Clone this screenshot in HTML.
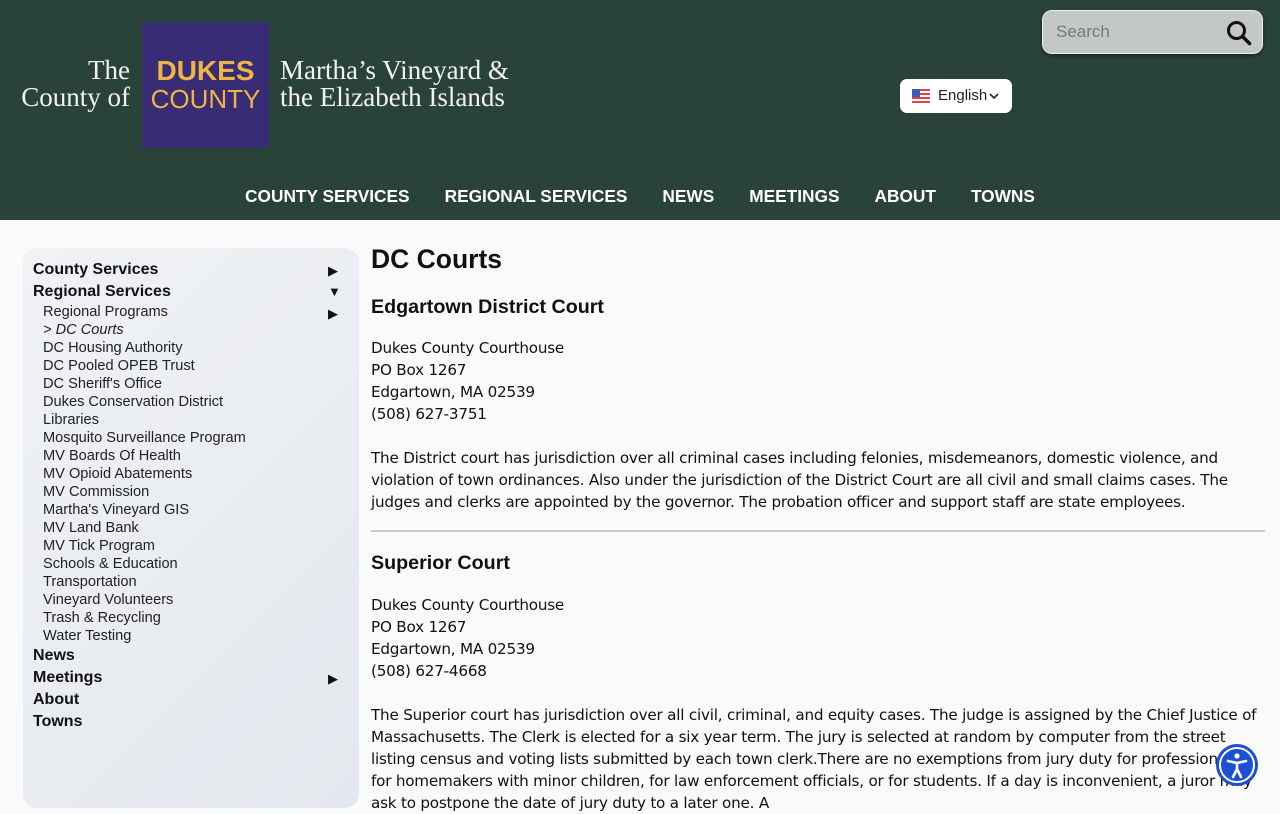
<!DOCTYPE html>
<html><head><meta charset="utf-8"><style>
*{box-sizing:border-box;margin:0;padding:0}
body{width:1280px;height:800px;overflow:hidden;background:#fafafa;font-family:"Liberation Sans",sans-serif;position:relative}
.hdr{position:absolute;left:0;top:0;width:1280px;height:220px;background:#2a4339}
.serif{font-family:"Liberation Serif",serif;color:#f2f2ee;font-size:27px;line-height:27px;position:absolute}
.logo{position:absolute;left:142px;top:22px;width:127px;height:126px;background:#392c76;color:#f0b445;text-align:center}
.search{position:absolute;left:1042px;top:10px;width:221px;height:44px;background:#c4c8c4;border:1px solid #eee;border-radius:10px;box-shadow:0 2px 4px rgba(0,0,0,.4)}
.lang{position:absolute;left:900px;top:79px;width:112px;height:34px;background:#fff;border-radius:7px;font-size:15px;color:#222}
.nav{position:absolute;top:186px;left:0;width:1280px;text-align:center;font-weight:bold;color:#fff;font-size:17.3px}
.nav span{margin:0 17.5px}
.side{position:absolute;left:23px;top:248px;width:336px;height:560px;background:linear-gradient(135deg,#f0f2f5,#e3e8ee);border-radius:14px}
.side div{position:absolute;left:10px;font-size:16px;font-weight:bold;color:#111}
.side .s{left:20px;font-size:14.6px;font-weight:normal;color:#222}
.arr{position:absolute;left:305px;font-size:13px;color:#111}
.main{position:absolute;left:371px;top:0;width:900px;color:#111}
.main p{font-family:"DejaVu Sans",sans-serif;font-size:15.2px;line-height:22px;position:absolute;left:0;width:890px;letter-spacing:-0.22px}
</style></head><body>
<div class="hdr">
<div class="serif" style="right:1150px;top:57px;text-align:right">The<br>County of</div>
<div class="logo"><div style="font-weight:bold;font-size:28px;margin-top:35px;line-height:28px">DUKES</div><div style="font-size:26px;line-height:28px">COUNTY</div></div>
<div class="serif" style="left:280px;top:57px">Martha’s Vineyard &amp;<br>the Elizabeth Islands</div>
<div class="search"><span style="position:absolute;left:13px;top:11px;font-size:17px;color:#777">Search</span>
<svg style="position:absolute;left:182px;top:8px" width="28" height="28" viewBox="0 0 28 28"><circle cx="11.5" cy="11.5" r="8" fill="none" stroke="#111" stroke-width="3"/><line x1="17.5" y1="17.5" x2="24.5" y2="24.5" stroke="#111" stroke-width="3.5" stroke-linecap="round"/></svg></div>
<div class="lang"><svg style="position:absolute;left:12px;top:10px" width="18" height="14"><rect width="18" height="14" fill="#d44"/><rect y="2" width="18" height="2" fill="#fff"/><rect y="6" width="18" height="2" fill="#fff"/><rect y="10" width="18" height="2" fill="#fff"/><rect width="8" height="8" fill="#3b5bb5"/></svg><span style="position:absolute;left:38px;top:8px">English</span><svg style="position:absolute;left:89px;top:14px" width="10" height="7"><path d="M1 1l4 4 4-4" stroke="#222" stroke-width="1.6" fill="none"/></svg></div>
<div class="nav"><span>COUNTY SERVICES</span><span>REGIONAL SERVICES</span><span>NEWS</span><span>MEETINGS</span><span>ABOUT</span><span>TOWNS</span></div>
</div>
<div class="side">
<div style="top:13px">County Services</div><span class="arr" style="top:15px">▶</span>
<div style="top:35px">Regional Services</div><span class="arr" style="top:36px">▼</span>
<div class="s" style="top:56px">Regional Programs</div><span class="arr" style="top:58px">▶</span>
<div class="s" style="top:74px;font-style:italic">&gt; DC Courts</div>
<div class="s" style="top:92px">DC Housing Authority</div>
<div class="s" style="top:110px">DC Pooled OPEB Trust</div>
<div class="s" style="top:128px">DC Sheriff's Office</div>
<div class="s" style="top:146px">Dukes Conservation District</div>
<div class="s" style="top:164px">Libraries</div>
<div class="s" style="top:182px">Mosquito Surveillance Program</div>
<div class="s" style="top:200px">MV Boards Of Health</div>
<div class="s" style="top:218px">MV Opioid Abatements</div>
<div class="s" style="top:236px">MV Commission</div>
<div class="s" style="top:254px">Martha's Vineyard GIS</div>
<div class="s" style="top:272px">MV Land Bank</div>
<div class="s" style="top:290px">MV Tick Program</div>
<div class="s" style="top:308px">Schools &amp; Education</div>
<div class="s" style="top:326px">Transportation</div>
<div class="s" style="top:344px">Vineyard Volunteers</div>
<div class="s" style="top:362px">Trash &amp; Recycling</div>
<div class="s" style="top:380px">Water Testing</div>
<div style="top:399px">News</div>
<div style="top:421px">Meetings</div><span class="arr" style="top:423px">▶</span>
<div style="top:443px">About</div>
<div style="top:465px">Towns</div>
</div>
<div class="main">
<div style="position:absolute;top:244px;font-size:26.5px;font-weight:bold">DC Courts</div>
<div style="position:absolute;top:296px;font-size:19.7px;font-weight:bold">Edgartown District Court</div>
<p style="top:337px">Dukes County Courthouse<br>PO Box 1267<br>Edgartown, MA 02539<br>(508) 627-3751</p>
<p style="top:447px">The District court has jurisdiction over all criminal cases including felonies, misdemeanors, domestic violence, and violation of town ordinances. Also under the jurisdiction of the District Court are all civil and small claims cases. The<br>judges and clerks are appointed by the governor. The probation officer and support staff are state employees.</p>
<div style="position:absolute;top:530px;left:0;width:894px;height:2px;background:#ccc"></div>
<div style="position:absolute;top:552px;font-size:19.7px;font-weight:bold">Superior Court</div>
<p style="top:594px">Dukes County Courthouse<br>PO Box 1267<br>Edgartown, MA 02539<br>(508) 627-4668</p>
<p style="top:704px">The Superior court has jurisdiction over all civil, criminal, and equity cases. The judge is assigned by the Chief Justice of Massachusetts. The Clerk is elected for a six year term. The jury is selected at random by computer from the street<br>listing census and voting lists submitted by each town clerk.There are no exemptions from jury duty for professionals,<br>for homemakers with minor children, for law enforcement officials, or for students. If a day is inconvenient, a juror may<br>ask to postpone the date of jury duty to a later one. A</p>
</div>
<svg style="position:absolute;left:1215px;top:743px" width="44" height="44" viewBox="0 0 44 44"><circle cx="22" cy="22" r="21" fill="#1a4fd6"/><circle cx="22" cy="22" r="17" fill="none" stroke="#fff" stroke-width="2"/><circle cx="22" cy="13" r="2.6" fill="#fff"/><path d="M13 18l9 2 9-2M22 20v6l-4 8M22 26l4 8" stroke="#fff" stroke-width="2.6" fill="none" stroke-linecap="round"/></svg>
</body></html>
